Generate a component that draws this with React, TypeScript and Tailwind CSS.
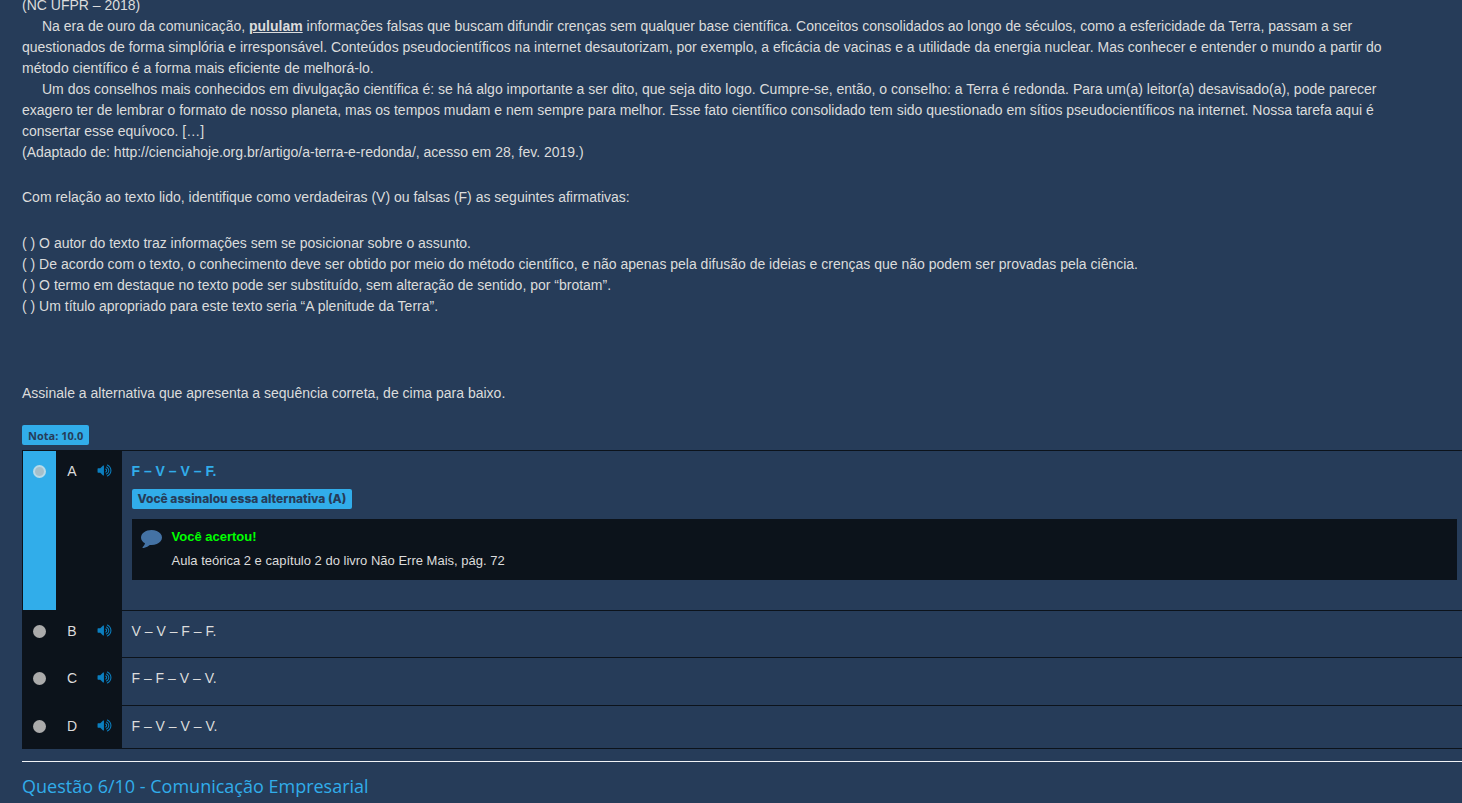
import clsx from 'clsx'

type Alternative = {
  letter: string
  text: string
  height: string
  selected?: boolean
}

const alternatives: Alternative[] = [
  { letter: 'A', text: 'F – V – V – F.', height: 'h-40', selected: true },
  { letter: 'B', text: 'V – V – F – F.', height: 'h-[47px]' },
  { letter: 'C', text: 'F – F – V – V.', height: 'h-12' },
  { letter: 'D', text: 'F – V – V – V.', height: 'h-[43px]' },
]

const statements = [
  'O autor do texto traz informações sem se posicionar sobre o assunto.',
  'De acordo com o texto, o conhecimento deve ser obtido por meio do método científico, e não apenas pela difusão de ideias e crenças que não podem ser provadas pela ciência.',
  'O termo em destaque no texto pode ser substituído, sem alteração de sentido, por “brotam”.',
  'Um título apropriado para este texto seria “A plenitude da Terra”.',
]

function VolumeIcon() {
  return (
    <svg viewBox="0 0 1792 1792" className="size-[15px] fill-current" aria-hidden="true">
      <path d="M832 352v1088q0 26-19 45t-45 19-45-19l-333-333h-262q-26 0-45-19t-19-45v-384q0-26 19-45t45-19h262l333-333q19-19 45-19t45 19 19 45zm384 544q0 76-42.5 141.5t-112.5 93.5q-10 5-25 5-26 0-45-18.5t-19-45.5q0-21 12-35.5t29-25 34-23 29-35.5 12-57-12-57-29-35.5-34-23-29-25-12-35.5q0-27 19-45.5t45-18.5q15 0 25 5 70 27 112.5 93t42.5 142zm256 0q0 153-85 282.5t-225 188.5q-13 5-25 5-27 0-46-19t-19-45q0-39 39-59 56-29 76-44 74-54 115.5-135.5t41.5-173.5-41.5-173.5-115.5-135.5q-20-15-76-44-39-20-39-59 0-26 19-45t45-19q13 0 26 5 140 59 225 188.5t85 282.5zm256 0q0 230-127 422.5t-338 283.5q-13 5-26 5-26 0-45-19t-19-45q0-36 39-59 7-4 22.5-10.5t22.5-10.5q46-25 82-51 123-91 192-227t69-289-69-289-192-227q-36-26-82-51-7-4-22.5-10.5t-22.5-10.5q-39-23-39-59 0-26 19-45t45-19q13 0 26 5 211 91 338 283.5t127 422.5z" />
    </svg>
  )
}

function CommentIcon() {
  return (
    <svg viewBox="0 0 1792 1792" className="size-[21px] shrink-0 fill-[#4472a4]" aria-hidden="true">
      <path d="M1792 896q0 174-120 321.5t-326 233-450 85.5q-70 0-145-8-198 175-460 242-49 14-114 22-17 2-30.5-9t-17.5-29v-1q-3-4-.5-12t2-10 4.5-9.5l6-9 7-8.5 8-9q7-8 31-34.5t34.5-38 31-39.5 32.5-51 27-59 26-76q-157-89-247.5-220t-90.5-281q0-130 71-248.5t191-204.5 286-136.5 348-50.5q244 0 450 85.5t326 233 120 321.5z" />
    </svg>
  )
}

function Feedback() {
  return (
    <>
      <div className="mt-[7px] flex h-5 w-fit items-center rounded-xs bg-[#31adea] px-1.5 font-['Inter',sans-serif] text-xs font-extrabold text-[#263c59]">
        Você assinalou essa alternativa (A)
      </div>
      <div className="mt-2.5 mr-[5px] flex h-[61px] gap-2.5 bg-[#0c131b] pt-2 pl-[9px] text-[13px]">
        <CommentIcon />
        <div>
          <p className="leading-5 font-bold text-[#00ff00]">Você acertou!</p>
          <p className="mt-1 leading-5">Aula teórica 2 e capítulo 2 do livro Não Erre Mais, pág. 72</p>
        </div>
      </div>
    </>
  )
}

function AlternativeRow({ letter, text, height, selected }: Alternative) {
  return (
    <tr className={clsx('align-top', height)}>
      <td className={clsx('w-[33px] border-t border-l border-[#0c131b] pt-3.5 pl-2.5', selected ? 'bg-[#31adea]' : 'bg-[#0c131b]')}>
        <input
          type="radio"
          id={`alternative-${letter}`}
          name="alternative"
          defaultChecked={selected}
          className="block size-[13px] appearance-none rounded-full bg-[#ababab] checked:border-2 checked:border-[#b8dae8] checked:bg-[#a6bfca]"
        />
      </td>
      <td className="w-[33px] border-t border-[#0c131b] bg-[#0c131b] pt-2.5 text-center">
        <label htmlFor={`alternative-${letter}`}>{letter}</label>
      </td>
      <td className="w-[33px] border-t border-[#0c131b] bg-[#0c131b] pt-3 pl-2">
        <button type="button" aria-label={`Ouvir alternativa ${letter}`} className="block text-[#0b7fc0]">
          <VolumeIcon />
        </button>
      </td>
      <td className="border-t border-[#0c131b] pt-2.5 pl-2.5">
        <p className={clsx(selected && 'font-bold text-[#31adea]')}>{text}</p>
        {selected && <Feedback />}
      </td>
    </tr>
  )
}

export default function App() {
  return (
    <div className="flow-root min-h-screen overflow-hidden bg-[#263c59] pl-[22px] font-['Liberation_Sans',Arial,sans-serif] text-[14px] leading-[21px] text-[#dcdcdc]">
      <main>
        <div className="-mt-[5px] pr-9">
          <p>(NC UFPR – 2018)</p>
          <p className="indent-5">
            Na era de ouro da comunicação, <strong className="underline">pululam</strong> informações falsas que buscam difundir crenças sem qualquer base científica. Conceitos consolidados ao longo de séculos, como a esfericidade da Terra, passam a ser questionados de forma simplória e irresponsável. Conteúdos pseudocientíficos na internet desautorizam, por exemplo, a eficácia de vacinas e a utilidade da energia nuclear. Mas conhecer e entender o mundo a partir do método científico é a forma mais eficiente de melhorá-lo.
          </p>
          <p className="indent-5">
            Um dos conselhos mais conhecidos em divulgação científica é: se há algo importante a ser dito, que seja dito logo. Cumpre-se, então, o conselho: a Terra é redonda. Para um(a) leitor(a) desavisado(a), pode parecer exagero ter de lembrar o formato de nosso planeta, mas os tempos mudam e nem sempre para melhor. Esse fato científico consolidado tem sido questionado em sítios pseudocientíficos na internet. Nossa tarefa aqui é consertar esse equívoco. […]
          </p>
          <p>(Adaptado de: http://cienciahoje.org.br/artigo/a-terra-e-redonda/, acesso em 28, fev. 2019.)</p>
          <p className="mt-6">
            Com relação ao texto lido, identifique como verdadeiras (V) ou falsas (F) as seguintes afirmativas:
          </p>
          <div className="mt-[25px]">
            {statements.map((statement) => (
              <p key={statement}>( ) {statement}</p>
            ))}
          </div>
          <p className="mt-[66px]">Assinale a alternativa que apresenta a sequência correta, de cima para baixo.</p>
        </div>

        <div className="mt-[21px] flex h-5 w-fit items-center rounded-xs bg-[#31adea] px-1.5 font-['Open_Sans',sans-serif] text-[11px] font-bold text-[#263c59]">
          Nota: 10.0
        </div>

        <table className="mt-[5px] w-full border-collapse border-b border-[#0c131b]">
          <tbody>
            {alternatives.map((alternative) => (
              <AlternativeRow key={alternative.letter} {...alternative} />
            ))}
          </tbody>
        </table>

        <hr className="mt-3 border-[#f0f3f6]" />
        <h2 className="mt-3 font-['Open_Sans',sans-serif] text-lg leading-[25px] text-[#31adea]">
          Questão 6/10 - Comunicação Empresarial
        </h2>
      </main>
    </div>
  )
}
